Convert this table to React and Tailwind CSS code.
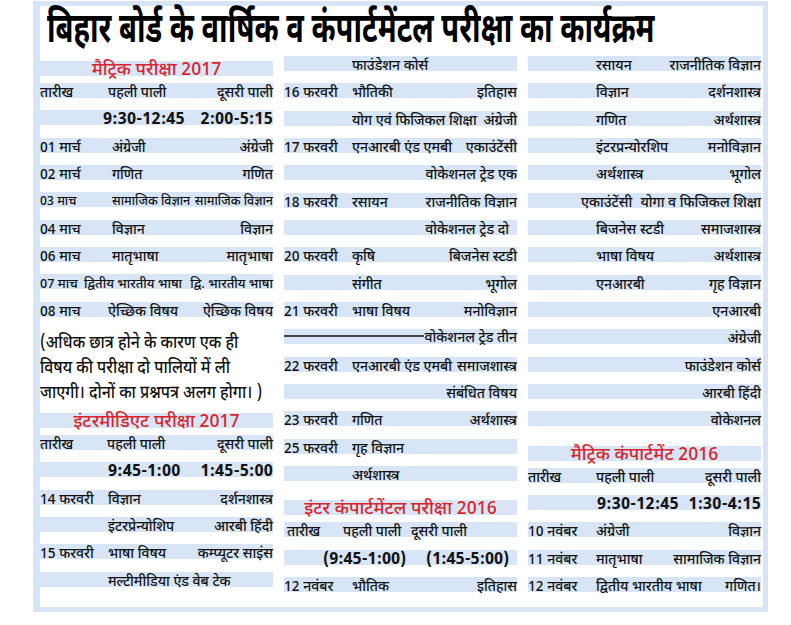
import React from 'react';

const font = { fontFamily: '"Noto Sans Devanagari", "Noto Sans", "Lohit Devanagari", "FreeSans", sans-serif' };

function Header({ text, className = 'pt-[6px] h-[28px]' }) {
  return (
    <div className={className}>
      <div className="h-[15px] bg-[#d7e5f6] flex justify-center">
        <span className="text-[18px] font-medium leading-[15px] text-[#d7262b] whitespace-nowrap pt-[2px]">{text}</span>
      </div>
    </div>
  );
}

function Row({ date = '', a = '', b = '', first = 'w-[68px]', bold = false, end = '', size = 'text-[14px]' }) {
  const text = bold ? 'text-[16px] font-bold tracking-[0.2px]' : `${size} font-medium`;
  return (
    <div className="h-[27.33px]">
      <div className={`h-[15px] bg-[#d7e5f6] flex whitespace-nowrap leading-[15px] text-[#121212] ${text}`}>
        <span className={`${first} shrink-0 pt-[3px]`}>{date}</span>
        <span className="flex-1 pt-[3px]">{a}</span>
        <span className={`pt-[3px] ${end}`}>{b}</span>
      </div>
    </div>
  );
}

const col1a = [
  ['01 मार्च', 'अंग्रेजी', 'अंग्रेजी'],
  ['02 मार्च', 'गणित', 'गणित'],
];

const col1b = [
  ['04 माच', 'विज्ञान', 'विज्ञान'],
  ['06 माच', 'मातृभाषा', 'मातृभाषा'],
];

const col1c = [
  ['14 फरवरी', 'विज्ञान', 'दर्शनशास्त्र'],
  ['', 'इंटरप्रेन्योशिप', 'आरबी हिंदी'],
  ['15 फरवरी', 'भाषा विषय', 'कम्प्यूटर साइंस'],
  ['', 'मल्टीमीडिया एंड वेब टेक', ''],
];

const col2a = [
  ['', 'फाउंडेशन कोर्स', ''],
  ['16 फरवरी', 'भौतिकी', 'इतिहास'],
  ['', 'योग एवं फिजिकल शिक्षा', 'अंग्रेजी'],
  ['17 फरवरी', 'एनआरबी एंड एमबी', 'एकाउंटेंसी'],
  ['', '', 'वोकेशनल ट्रेड एक'],
  ['18 फरवरी', 'रसायन', 'राजनीतिक विज्ञान'],
];

const col2b = [
  ['20 फरवरी', 'कृषि', 'बिजनेस स्टडी'],
  ['', 'संगीत', 'भूगोल'],
  ['21 फरवरी', 'भाषा विषय', 'मनोविज्ञान'],
];

const col2c = [
  ['22 फरवरी', 'एनआरबी एंड एमबी', 'समाजशास्त्र'],
  ['', '', 'संबंधित विषय'],
  ['23 फरवरी', 'गणित', 'अर्थशास्त्र'],
  ['25 फरवरी', 'गृह विज्ञान', ''],
  ['', 'अर्थशास्त्र', ''],
];

const col3a = [
  ['', 'रसायन', 'राजनीतिक विज्ञान'],
  ['', 'विज्ञान', 'दर्शनशास्त्र'],
  ['', 'गणित', 'अर्थशास्त्र'],
  ['', 'इंटरप्रन्योरशिप', 'मनोविज्ञान'],
  ['', 'अर्थशास्त्र', 'भूगोल'],
];

const col3b = [
  ['', 'बिजनेस स्टडी', 'समाजशास्त्र'],
  ['', 'भाषा विषय', 'अर्थशास्त्र'],
  ['', 'एनआरबी', 'गृह विज्ञान'],
  ['', '', 'एनआरबी'],
  ['', '', 'अंग्रेजी'],
  ['', '', 'फाउंडेशन कोर्स'],
  ['', '', 'आरबी हिंदी'],
  ['', '', 'वोकेशनल'],
];

const col3c = [
  ['10 नवंबर', 'अंग्रेजी', 'विज्ञान'],
  ['11 नवंबर', 'मातृभाषा', 'सामाजिक विज्ञान'],
  ['12 नवंबर', 'द्वितीय भारतीय भाषा', 'गणित।'],
];

export default function App() {
  return (
    <div className="w-[791px] h-[625px] bg-white pt-[1px]" style={font}>
      <div className="ml-[33px] w-[735px] h-[611px] border-[#d7e5f6] border-l-[7px] border-t-[5px] border-r-[5px] border-b-[5px] bg-white">
        <div className="h-[49px] pl-[7px] pt-[4px]">
          <h1 className="w-max text-[41px] leading-[44px] font-bold text-black whitespace-nowrap origin-left scale-x-[0.71]">
            बिहार बोर्ड के वार्षिक व कंपार्टमेंटल परीक्षा का कार्यक्रम
          </h1>
        </div>

        <div className="flex gap-[11px] pr-[3px]">
          {/* column 1 */}
          <div className="w-[233px] shrink-0">
            <Header text="मैट्रिक परीक्षा 2017" />
            <Row date="तारीख" a="पहली पाली" b="दूसरी पाली" first="w-[68px]" />
            <Row a="9:30-12:45" b="2:00-5:15" first="w-[63px]" bold />
            {col1a.map((r, i) => (
              <Row key={i} date={r[0]} a={r[1]} b={r[2]} first="w-[72px]" />
            ))}
            <Row date="03 माच" a="सामाजिक विज्ञान" b="सामाजिक विज्ञान" first="w-[72px]" size="text-[12.5px]" />
            {col1b.map((r, i) => (
              <Row key={i} date={r[0]} a={r[1]} b={r[2]} first="w-[72px]" />
            ))}
            <Row date="07 माच" a="द्वितीय भारतीय भाषा" b="द्वि. भारतीय भाषा" first="w-[44px]" size="text-[13px]" />
            <Row date="08 माच" a="ऐच्छिक विषय" b="ऐच्छिक विषय" first="w-[68px]" />
            <div className="h-[78px] pt-[2px] text-[18px] font-medium leading-[25px] text-[#121212]">
              <p className="whitespace-nowrap origin-left scale-x-[0.88]">(अधिक छात्र होने के कारण एक ही</p>
              <p className="whitespace-nowrap origin-left scale-x-[0.88]">विषय की परीक्षा दो पालियों में ली</p>
              <p className="whitespace-nowrap origin-left scale-x-[0.88]">जाएगी। दोनों का प्रश्नपत्र अलग होगा। )</p>
            </div>
            <Header text="इंटरमीडिएट परीक्षा 2017" />
            <Row date="तारीख" a="पहली पाली" b="दूसरी पाली" first="w-[67px]" />
            <Row a="9:45-1:00" b="1:45-5:00" first="w-[68px]" bold />
            {col1c.map((r, i) => (
              <Row key={i} date={r[0]} a={r[1]} b={r[2]} />
            ))}
          </div>

          {/* column 2 */}
          <div className="w-[233px] shrink-0 mt-[1px]">
            {col2a.map((r, i) => (
              <Row key={i} date={r[0]} a={r[1]} b={r[2]} />
            ))}
            <Row b="वोकेशनल ट्रेड दो" end="pr-[8px]" />
            {col2b.map((r, i) => (
              <Row key={i} date={r[0]} a={r[1]} b={r[2]} />
            ))}
            <div className="h-[27.33px]">
              <div className="h-[15px] bg-[#d7e5f6] flex items-center gap-[1px] text-[14px] font-medium leading-[15px] text-[#121212] whitespace-nowrap">
                <div className="flex-1 h-[1.5px] bg-[#444] -translate-y-[1px]" />
                <span className="pt-[3px]">वोकेशनल ट्रेड तीन</span>
              </div>
            </div>
            {col2c.map((r, i) => (
              <Row key={i} date={r[0]} a={r[1]} b={r[2]} />
            ))}
            <Header text="इंटर कंपार्टमेंटल परीक्षा 2016" className="pt-[7px] h-[29px]" />
            <div className="h-[27.33px]">
              <div className="h-[15px] bg-[#d7e5f6] flex whitespace-nowrap leading-[15px] text-[14px] font-medium text-[#121212]">
                <span className="w-[59px] shrink-0 pl-[3px] pt-[3px]">तारीख</span>
                <span className="w-[68px] shrink-0 pt-[3px]">पहली पाली</span>
                <span className="pt-[3px]">दूसरी पाली</span>
              </div>
            </div>
            <div className="h-[27.33px]">
              <div className="h-[15px] bg-[#d7e5f6] flex whitespace-nowrap leading-[15px] text-[16px] font-bold text-[#121212]">
                <span className="w-[142px] shrink-0 pl-[39px] pt-[3px]">(9:45-1:00)</span>
                <span className="pt-[3px]">(1:45-5:00)</span>
              </div>
            </div>
            <Row date="12 नवंबर" a="भौतिक" b="इतिहास" />
          </div>

          {/* column 3 */}
          <div className="w-[233px] shrink-0 mt-[1px]">
            {col3a.map((r, i) => (
              <Row key={i} date={r[0]} a={r[1]} b={r[2]} />
            ))}
            <Row a="एकाउंटेंसी" b="योगा व फिजिकल शिक्षा" first="w-[53px]" />
            {col3b.map((r, i) => (
              <Row key={i} date={r[0]} a={r[1]} b={r[2]} />
            ))}
            <Header text="मैट्रिक कंपार्टमेंट 2016" className="pt-[7px] h-[29px]" />
            <Row date="तारीख" a="पहली पाली" b="दूसरी पाली" />
            <Row a="9:30-12:45" b="1:30-4:15" first="w-[69px]" bold />
            {col3c.map((r, i) => (
              <Row key={i} date={r[0]} a={r[1]} b={r[2]} />
            ))}
          </div>
        </div>
      </div>
    </div>
  );
}
